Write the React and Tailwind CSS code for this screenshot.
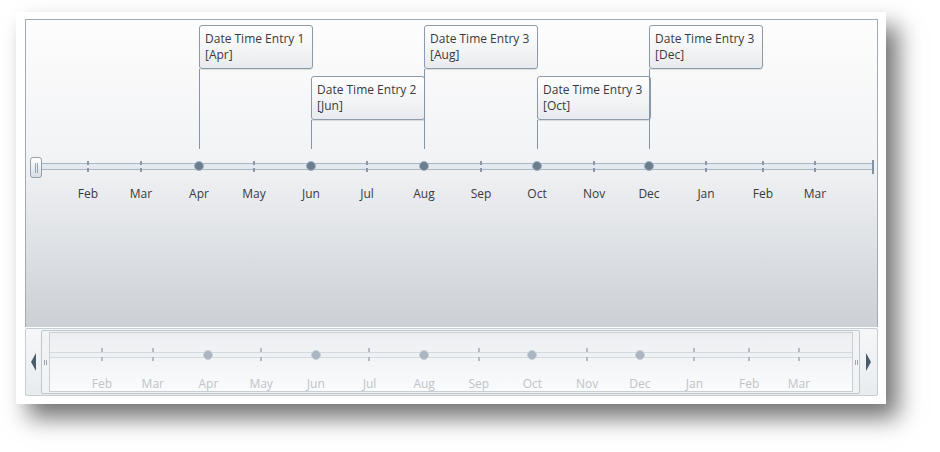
import React from 'react';

// month ticks on the main axis (page x of each tick)
const MONTHS = [
    { label: 'Feb', x: 88 },
    { label: 'Mar', x: 141 },
    { label: 'Apr', x: 199, event: true },
    { label: 'May', x: 254 },
    { label: 'Jun', x: 311, event: true },
    { label: 'Jul', x: 367 },
    { label: 'Aug', x: 424, event: true },
    { label: 'Sep', x: 481 },
    { label: 'Oct', x: 537, event: true },
    { label: 'Nov', x: 594 },
    { label: 'Dec', x: 649, event: true },
    { label: 'Jan', x: 706 },
    { label: 'Feb', x: 763 },
    { label: 'Mar', x: 815 },
];

const EVENTS = [
    { title: 'Date Time Entry 1', month: 'Apr', x: 199, row: 0 },
    { title: 'Date Time Entry 2', month: 'Jun', x: 311, row: 1 },
    { title: 'Date Time Entry 3', month: 'Aug', x: 424, row: 0 },
    { title: 'Date Time Entry 3', month: 'Oct', x: 537, row: 1 },
    { title: 'Date Time Entry 3', month: 'Dec', x: 649, row: 0 },
];

// plot canvas origin (inside the 1px border)
const OX = 26;
const OY = 20;

// overview strip maps the main axis onto a slightly narrower range
const miniX = (x) => 103 + (x - 88) * 0.9587 - 51;

const font = { fontFamily: '"Open Sans", "Liberation Sans", sans-serif' };

const Grip = () => (
    <div className="flex gap-px">
        <div className="w-px h-[5px] bg-[#9ba5af]" />
        <div className="w-px h-[5px] bg-[#9ba5af]" />
    </div>
);

const Callout = ({ title, month, x, row }) => {
    const top = row === 0 ? 25 : 76;
    return (
        <>
            <div
                className="absolute w-[114px] h-[44px] border border-[#8c9aa9] rounded-[3px] bg-gradient-to-b from-white to-[#e8ebee] pl-[5px] pt-[5px] text-[12px] leading-[16px] text-[#3a3a3a] shadow-[0_1px_1px_rgba(0,0,0,0.12)]"
                style={{ left: x - OX, top: top - OY }}
            >
                <div>{title}</div>
                <div>[{month}]</div>
            </div>
            <div
                className="absolute w-px bg-[#8796a6]"
                style={{ left: x - OX, top: top + 44 - OY, height: 149 - (top + 44) }}
            />
        </>
    );
};

const MainAxis = () => (
    <>
        <div className="absolute left-[11px] top-[143px] w-[836px] h-[7px] border-y border-[#a9b7c5] bg-[#e3e9ef]" />
        <div className="absolute left-[846px] top-[140px] w-[2px] h-[14px] bg-[#8091a2]" />

        {MONTHS.map((m, i) => (
            <React.Fragment key={i}>
                {m.event ? (
                    <div
                        className="absolute w-[10px] h-[10px] rounded-full bg-[#6c7d8f] border border-[#a6b3c0]"
                        style={{ left: m.x - OX - 5, top: 141 }}
                    />
                ) : (
                    <>
                        <div className="absolute w-[2px] h-[4px] bg-[#8a98a7]" style={{ left: m.x - OX - 1, top: 141 }} />
                        <div className="absolute w-[2px] h-[4px] bg-[#8a98a7]" style={{ left: m.x - OX - 1, top: 148 }} />
                    </>
                )}
                <div
                    className="absolute -translate-x-1/2 text-[12px] leading-[16px] text-[#3a3a3a]"
                    style={{ left: m.x - OX, top: 166 }}
                >
                    {m.label}
                </div>
            </React.Fragment>
        ))}

        {/* range thumb */}
        <div className="absolute left-[4px] top-[137px] w-[12px] h-[21px] border border-[#95a1ad] rounded-[3px] bg-gradient-to-b from-white to-[#d8dee4] flex items-center justify-center">
            <div className="flex gap-px">
                <div className="w-px h-[10px] bg-[#96a2ae]" />
                <div className="w-px h-[10px] bg-[#96a2ae]" />
            </div>
        </div>
    </>
);

const MiniAxis = () => (
    <>
        <div className="absolute left-0 right-0 top-[19px] h-[6px] border-y border-[#d3dae1] bg-[#eef1f4]" />
        {MONTHS.map((m, i) => {
            const x = miniX(m.x);
            return (
                <React.Fragment key={i}>
                    {m.event ? (
                        <div
                            className="absolute w-[10px] h-[10px] rounded-full bg-[#aab5c0] border border-[#c9d1d9]"
                            style={{ left: x - 5, top: 17 }}
                        />
                    ) : (
                        <>
                            <div className="absolute w-[2px] h-[4px] bg-[#b4bcc5]" style={{ left: x - 1, top: 15 }} />
                            <div className="absolute w-[2px] h-[4px] bg-[#b4bcc5]" style={{ left: x - 1, top: 24 }} />
                        </>
                    )}
                    <div
                        className="absolute -translate-x-1/2 text-[12px] leading-[16px] text-[#bfc3c8]"
                        style={{ left: x, top: 43 }}
                    >
                        {m.label}
                    </div>
                </React.Fragment>
            );
        })}
    </>
);

export default function App() {
    return (
        <div className="w-[940px] h-[452px] bg-white pl-[16px] pt-[12px]" style={font}>
            <div className="w-[870px] h-[392px] bg-white pl-[9px] pt-[7px] pr-[8px] pb-[8px] shadow-[12px_14px_22px_rgba(0,0,0,0.55)] flex flex-col">
                {/* timeline plot */}
                <div className="relative h-[308px] border-t border-x border-[#a0abb7] bg-[linear-gradient(to_bottom,#fdfdfd_0%,#f2f3f5_45%,#cbd0d6_100%)]">
                    {EVENTS.map((e, i) => (
                        <Callout key={i} {...e} />
                    ))}
                    <MainAxis />
                </div>

                {/* overview scroller */}
                <div className="mt-px h-[68px] flex border border-[#c5ccd3] rounded-[2px] bg-gradient-to-b from-[#f5f7f9] to-[#e9ecef]">
                    <div className="w-[15px] flex items-center justify-center">
                        <div className="w-0 h-0 border-y-[9px] border-y-transparent border-r-[5px] border-r-[#4b5c6d]" />
                    </div>
                    <div className="w-[819px] my-px flex border border-[#bfc6cd] rounded-[2px] bg-[#f1f3f5]">
                        <div className="w-[7px] flex items-center justify-center">
                            <Grip />
                        </div>
                        <div className="relative flex-1 my-px border border-[#c9ced3] bg-gradient-to-b from-[#eceef1] to-[#fafbfc] overflow-hidden">
                            <MiniAxis />
                        </div>
                        <div className="w-[6px] flex items-center justify-center">
                            <Grip />
                        </div>
                    </div>
                    <div className="w-[17px] flex items-center justify-center">
                        <div className="w-0 h-0 border-y-[9px] border-y-transparent border-l-[5px] border-l-[#4b5c6d]" />
                    </div>
                </div>
            </div>
        </div>
    );
}
